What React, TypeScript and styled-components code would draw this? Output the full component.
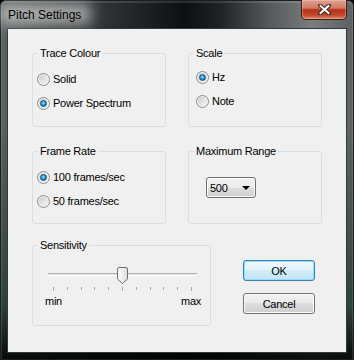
import React, { useState } from 'react';
import styled, { createGlobalStyle } from 'styled-components';

const GlobalStyle = createGlobalStyle`
  html, body {
    margin: 0;
    padding: 0;
    overflow: hidden;
    background: #000;
  }
  body {
    font-family: 'Liberation Sans', Arial, sans-serif;
  }
`;

const Window = styled.div`
  position: relative;
  width: 354px;
  height: 360px;
  box-sizing: border-box;
  display: flex;
  flex-direction: column;
  padding: 0 7px 7px 7px;
  border-radius: 6px 6px 0 0;
  overflow: hidden;
  background:
    linear-gradient(to bottom, rgba(0, 0, 0, 0) 35%, rgba(6, 40, 20, 0.55) 85%, rgba(0, 0, 0, 0.9) 100%),
    linear-gradient(90deg, #5c6162 0%, #4a4e4f 12%, #2b2f31 32%, #0c1012 52%, #1e2224 62%, #55595a 76%, #7a7d7e 88%, #5d6061 100%);
  box-shadow: inset 0 0 0 1px #1b1d1e, inset 0 1px 0 2px rgba(255, 255, 255, 0.12);
`;

const TitleBar = styled.div`
  height: 28px;
  display: flex;
  align-items: flex-start;
`;

const Title = styled.div`
  position: relative;
  flex: 1;
  margin-top: 8px;
  padding-left: 1px;
  font-size: 12px;
  line-height: 14px;
  color: #000;
  z-index: 0;
  &::before {
    content: '';
    position: absolute;
    left: -8px;
    top: -4px;
    width: 92px;
    height: 20px;
    background: rgba(255, 255, 255, 0.55);
    filter: blur(7px);
    z-index: -1;
  }
`;

const CloseButton = styled.div`
  width: 46px;
  height: 20px;
  box-sizing: border-box;
  display: flex;
  align-items: center;
  justify-content: center;
  border: 1px solid #3a1a12;
  border-top: none;
  border-radius: 0 0 5px 5px;
  background: linear-gradient(#dfa293 0%, #d07a66 42%, #b7321a 52%, #c2452a 78%, #e2876a 100%);
  box-shadow: inset 0 0 0 1px rgba(255, 220, 200, 0.35);
`;

const Client = styled.div`
  flex: 1;
  background: #f0f0f0;
  border: 1px solid #2e3a3e;
  padding: 24px 0 0 24px;
  display: flex;
  flex-direction: column;
  color: #000;
  font-size: 11px;
  letter-spacing: -0.25px;
`;

const Grid = styled.div`
  display: grid;
  grid-template-columns: 134px 134px;
  column-gap: 22px;
  row-gap: 24px;
`;

const Group = styled.div<{ $h: number; $w?: number; $pt?: number; $pl?: number }>`
  position: relative;
  box-sizing: border-box;
  height: ${p => p.$h}px;
  width: ${p => (p.$w ? `${p.$w}px` : 'auto')};
  border: 1px solid #d5dfe5;
  border-radius: 3px;
  padding-top: ${p => p.$pt ?? 0}px;
  padding-left: ${p => p.$pl ?? 0}px;
  display: flex;
  flex-direction: column;
`;

const Legend = styled.span`
  position: absolute;
  top: -7px;
  left: 5px;
  padding: 0 2px;
  line-height: 13px;
  background: #f0f0f0;
`;

const Options = styled.div`
  display: flex;
  flex-direction: column;
  gap: 11px;
`;

const OptionRow = styled.label`
  display: flex;
  align-items: center;
  gap: 3px;
  height: 13px;
  line-height: 13px;
`;

const RadioDot = styled.span<{ $checked?: boolean }>`
  position: relative;
  width: 13px;
  height: 13px;
  box-sizing: border-box;
  border-radius: 50%;
  border: 1px solid #8a8c8e;
  background: linear-gradient(135deg, #c4c4c4 0%, #e2e2e2 50%, #f8f8f8 100%);
  box-shadow: inset 0 0 0 1px #f4f4f4;
  &::after {
    content: '';
    display: ${p => (p.$checked ? 'block' : 'none')};
    position: absolute;
    left: 2px;
    top: 2px;
    width: 7px;
    height: 7px;
    box-sizing: border-box;
    border-radius: 50%;
    border: 1px solid #1b4f7c;
    background: radial-gradient(circle at 45% 40%, #9fe8ff 0%, #2a9ad8 45%, #0d4f8a 100%);
  }
`;

const Dropdown = styled.div`
  width: 50px;
  height: 21px;
  box-sizing: border-box;
  margin-left: 17px;
  display: flex;
  align-items: center;
  justify-content: space-between;
  padding: 0 5px 0 3px;
  border: 1px solid #707070;
  border-radius: 3px;
  background: linear-gradient(#f2f2f2 0%, #ebebeb 50%, #dddddd 50%, #cfcfcf 100%);
  box-shadow: inset 0 0 0 1px #fcfcfc;
`;

const Arrow = styled.span`
  width: 0;
  height: 0;
  border-left: 4px solid transparent;
  border-right: 4px solid transparent;
  border-top: 4px solid #000;
`;

const BottomRow = styled.div`
  display: flex;
  gap: 32px;
  margin-top: 21px;
`;

const SliderWrap = styled.div`
  position: relative;
  width: 149px;
  margin: 27px 0 0 15px;
`;

const Track = styled.div`
  height: 3px;
  box-sizing: border-box;
  border-top: 1px solid #b0b0b0;
  border-bottom: 1px solid #ffffff;
  background: #e2e2e2;
`;

const Thumb = styled.svg`
  position: absolute;
  top: -6px;
`;

const Ticks = styled.div`
  display: flex;
  justify-content: space-between;
  align-items: flex-start;
  height: 4px;
  margin-top: 11px;
  padding: 0 5px;
`;

const Tick = styled.span<{ $major?: boolean }>`
  width: 1px;
  height: ${p => (p.$major ? 4 : 3)}px;
  background: #a8a8a8;
`;

const RangeLabels = styled.div`
  display: flex;
  justify-content: space-between;
  margin: 4px 9px 0 12px;
  line-height: 13px;
`;

const Buttons = styled.div`
  display: flex;
  flex-direction: column;
  gap: 12px;
  margin-top: 15px;
`;

const Button = styled.button<{ $default?: boolean }>`
  width: 72px;
  height: 21px;
  padding: 0;
  font-family: 'Liberation Sans', Arial, sans-serif;
  font-size: 11px;
  letter-spacing: -0.25px;
  color: #000;
  border-radius: 3px;
  border: 1px solid ${p => (p.$default ? '#3c7fb1' : '#707070')};
  background: ${p =>
    p.$default
      ? 'linear-gradient(#f0f8fd 0%, #e3f2fb 50%, #d2ebf9 50%, #c4e4f6 100%)'
      : 'linear-gradient(#f2f2f2 0%, #ebebeb 50%, #dddddd 50%, #cfcfcf 100%)'};
  box-shadow: inset 0 0 0 1px ${p => (p.$default ? '#8fdcfb' : '#fcfcfc')};
`;

function Radio({ checked, label, onClick }: { checked: boolean; label: string; onClick: () => void }) {
  return (
    <OptionRow onClick={onClick}>
      <RadioDot $checked={checked} />
      {label}
    </OptionRow>
  );
}

function App() {
  const [trace, setTrace] = useState('power');
  const [scale, setScale] = useState('hz');
  const [rate, setRate] = useState(100);
  const sensitivity = 5;
  const thumbLeft = 5 + (sensitivity / 10) * 139 - 5.5;

  return (
    <>
      <GlobalStyle />
      <Window>
        <TitleBar>
          <Title>Pitch Settings</Title>
          <CloseButton>
            <svg width="13" height="11" viewBox="0 0 13 11">
              <path d="M2 1.5 L11 9.5 M11 1.5 L2 9.5" stroke="#3b2a28" strokeWidth="4" strokeLinecap="round" />
              <path d="M2.5 2 L10.5 9 M10.5 2 L2.5 9" stroke="#ffffff" strokeWidth="2" strokeLinecap="square" />
            </svg>
          </CloseButton>
        </TitleBar>
        <Client>
          <Grid>
            <Group $h={74} $pt={19} $pl={4}>
              <Legend>Trace Colour</Legend>
              <Options>
                <Radio checked={trace === 'solid'} label="Solid" onClick={() => setTrace('solid')} />
                <Radio checked={trace === 'power'} label="Power Spectrum" onClick={() => setTrace('power')} />
              </Options>
            </Group>
            <Group $h={74} $pt={17} $pl={7}>
              <Legend>Scale</Legend>
              <Options>
                <Radio checked={scale === 'hz'} label="Hz" onClick={() => setScale('hz')} />
                <Radio checked={scale === 'note'} label="Note" onClick={() => setScale('note')} />
              </Options>
            </Group>
            <Group $h={73} $pt={19} $pl={4}>
              <Legend>Frame Rate</Legend>
              <Options>
                <Radio checked={rate === 100} label="100 frames/sec" onClick={() => setRate(100)} />
                <Radio checked={rate === 50} label="50 frames/sec" onClick={() => setRate(50)} />
              </Options>
            </Group>
            <Group $h={73} $pt={25}>
              <Legend>Maximum Range</Legend>
              <Dropdown>
                500
                <Arrow />
              </Dropdown>
            </Group>
          </Grid>
          <BottomRow>
            <Group $h={81} $w={179}>
              <Legend>Sensitivity</Legend>
              <SliderWrap>
                <Track />
                <Thumb width="11" height="17" viewBox="0 0 11 17" style={{ left: thumbLeft }}>
                  <defs>
                    <linearGradient id="thumbFill" x1="0" y1="0" x2="1" y2="0">
                      <stop offset="0" stopColor="#ffffff" />
                      <stop offset="1" stopColor="#dcdcdc" />
                    </linearGradient>
                  </defs>
                  <path
                    d="M0.5 2 Q0.5 0.5 2 0.5 H9 Q10.5 0.5 10.5 2 V12 L5.5 16.5 L0.5 12 Z"
                    fill="url(#thumbFill)"
                    stroke="#707070"
                  />
                </Thumb>
                <Ticks>
                  {Array.from({ length: 11 }).map((_, i) => (
                    <Tick key={i} $major={i === 0 || i === 5 || i === 10} />
                  ))}
                </Ticks>
              </SliderWrap>
              <RangeLabels>
                <span>min</span>
                <span>max</span>
              </RangeLabels>
            </Group>
            <Buttons>
              <Button $default>OK</Button>
              <Button>Cancel</Button>
            </Buttons>
          </BottomRow>
        </Client>
      </Window>
    </>
  );
}

export default App;
